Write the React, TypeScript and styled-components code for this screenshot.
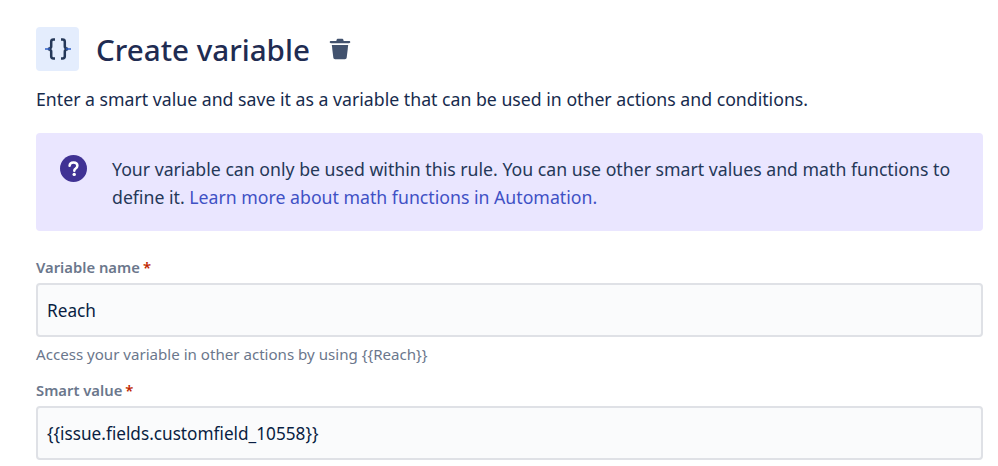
import React from 'react';
import styled, { createGlobalStyle } from 'styled-components';

const GlobalStyle = createGlobalStyle`
  html, body {
    margin: 0;
    padding: 0;
    background: #fff;
    overflow: hidden;
  }

  body {
    font-family: 'Noto Sans', 'Open Sans', sans-serif;
    color: #172b4d;
  }
`;

const Page = styled.div`
  width: 998px;
  height: 466px;
  box-sizing: border-box;
  padding: 27px 15px 0 36px;
`;

const Header = styled.div`
  display: flex;
  align-items: center;
  height: 44px;
`;

const IconTile = styled.div`
  width: 43px;
  height: 44px;
  flex-shrink: 0;
  border-radius: 4px;
  background: #e4edfd;
  display: flex;
  align-items: center;
  justify-content: center;
  margin-right: 17px;
`;

const Title = styled.h1`
  margin: 2px 19px 0 0;
  font-size: 29.6px;
  font-weight: 500;
  line-height: 48px;
  color: #1f2c52;
`;

const Description = styled.p`
  margin: 15px 0 0;
  font-size: 17.7px;
  line-height: 26px;
  white-space: nowrap;
  color: #172b4d;
`;

const Banner = styled.div`
  margin-top: 21px;
  height: 98px;
  box-sizing: border-box;
  padding: 22px 24px;
  display: flex;
  gap: 25px;
  border-radius: 4px;
  background: #eae6ff;
`;

const BannerIcon = styled.div`
  width: 27px;
  height: 27px;
  flex-shrink: 0;
`;

const BannerText = styled.div`
  font-size: 17.7px;
  line-height: 28px;
  color: #253858;
`;

const Link = styled.a`
  color: #3f51c5;
  text-decoration: none;
`;

const Field = styled.div`
  display: flex;
  flex-direction: column;
`;

const Label = styled.label<{ $top: number }>`
  margin-top: ${(p) => p.$top}px;
  font-size: 14.8px;
  font-weight: 600;
  line-height: 20px;
  color: #6b778c;
`;

const Required = styled.span`
  margin-left: 3px;
  color: #bf2600;
`;

const Input = styled.div`
  margin-top: 6px;
  height: 54px;
  box-sizing: border-box;
  border: 2px solid #dfe1e6;
  border-radius: 4px;
  background: #fafbfc;
  padding: 0 9px;
  display: flex;
  align-items: center;
  font-size: 17.2px;
  color: #091e42;
`;

const Helper = styled.div`
  margin-top: 7px;
  font-size: 15.1px;
  line-height: 20px;
  color: #6b778c;
`;

function BracesIcon () {
  return (
    <svg width='26' height='22' viewBox='0 0 26 22' fill='none'>
      <path d='M10 1.5H8.5C7 1.5 6.2 2.3 6.2 3.7V8.6C6.2 10 5 10.8 3 11C5 11.2 6.2 12 6.2 13.4V18.3C6.2 19.7 7 20.5 8.5 20.5H10' stroke='#253858' strokeWidth='2.5' />
      <path d='M16 1.5H17.5C19 1.5 19.8 2.3 19.8 3.7V8.6C19.8 10 21 10.8 23 11C21 11.2 19.8 12 19.8 13.4V18.3C19.8 19.7 19 20.5 17.5 20.5H16' stroke='#253858' strokeWidth='2.5' />
      <path d='M0 11H5M21 11H26' stroke='#2f5fc4' strokeWidth='1.4' />
    </svg>
  );
}

function TrashIcon () {
  return (
    <svg width='22' height='22' viewBox='0 0 22 22'>
      <path d='M7.5 2.2C7.7 1.3 8.3 0.8 9.2 0.8H12.8C13.7 0.8 14.3 1.3 14.5 2.2L14.7 3H20C20.8 3 21.3 3.5 21.3 4.1C21.3 4.8 20.8 5.2 20 5.2H2C1.2 5.2 0.7 4.8 0.7 4.1C0.7 3.5 1.2 3 2 3H7.3Z' fill='#42526e' />
      <path d='M2.8 7H19.2L17.7 19.6C17.5 20.6 16.9 21.2 15.9 21.2H6.1C5.1 21.2 4.5 20.6 4.3 19.6Z' fill='#42526e' />
    </svg>
  );
}

function QuestionIcon () {
  return (
    <svg width='27' height='27' viewBox='0 0 27 27'>
      <circle cx='13.5' cy='13.5' r='13.5' fill='#403294' />
      <path d='M9.6 10.8C9.7 8.6 11.3 7.4 13.5 7.4C15.8 7.4 17.4 8.8 17.4 10.7C17.4 12.3 16.5 13 15.4 13.8C14.5 14.4 14.3 14.8 14.3 15.7' fill='none' stroke='#fff' strokeWidth='2.5' strokeLinecap='round' />
      <circle cx='14.2' cy='19.4' r='1.7' fill='#fff' />
    </svg>
  );
}

export default function App (): React.ReactElement {
  return (
    <Page>
      <GlobalStyle />
      <Header>
        <IconTile><BracesIcon /></IconTile>
        <Title>Create variable</Title>
        <TrashIcon />
      </Header>
      <Description>Enter a smart value and save it as a variable that can be used in other actions and conditions.</Description>
      <Banner>
        <BannerIcon><QuestionIcon /></BannerIcon>
        <BannerText>
          Your variable can only be used within this rule. You can use other smart values and math functions to define it.{' '}
          <Link href='#'>Learn more about math functions in Automation.</Link>
        </BannerText>
      </Banner>
      <Field>
        <Label $top={26}>Variable name<Required>*</Required></Label>
        <Input>Reach</Input>
        <Helper>Access your variable in other actions by using {'{{Reach}}'}</Helper>
      </Field>
      <Field>
        <Label $top={16}>Smart value<Required>*</Required></Label>
        <Input>{'{{issue.fields.customfield_10558}}'}</Input>
      </Field>
    </Page>
  );
}
